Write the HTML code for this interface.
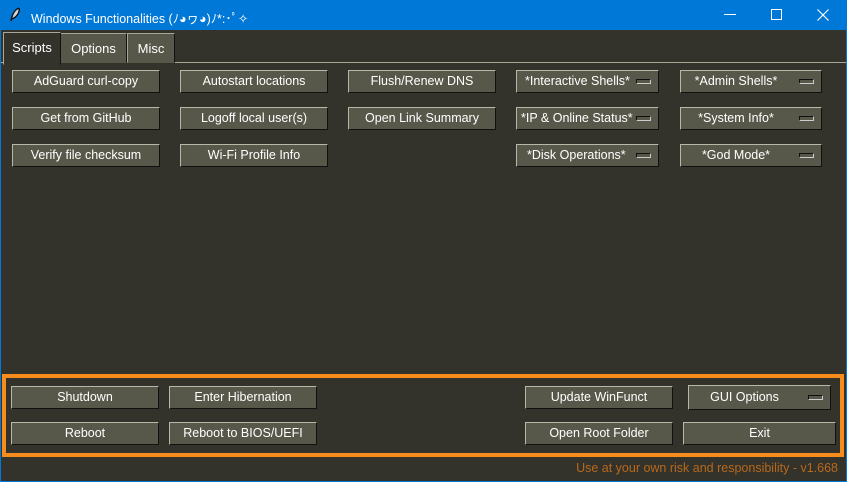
<!DOCTYPE html>
<html><head><meta charset="utf-8"><style>
*{margin:0;padding:0;box-sizing:border-box}
body{width:847px;height:482px;overflow:hidden;background:#0078d7;font-family:"Liberation Sans","DejaVu Sans",sans-serif;font-size:12.5px;position:relative}
#win{position:absolute;left:1px;top:30px;width:845px;height:451px;background:#33332b}
.t{position:absolute;color:#fff}
.b{position:absolute;height:23px;background:#58584a;border:1px solid;border-color:#b8b8a8 #111 #111 #b8b8a8;color:#fff;text-align:center;line-height:21px;white-space:nowrap}
.ind{position:absolute;right:7px;top:8px;width:15px;height:5px;background:#58584a;border:1px solid;border-color:#111 #ccc #ccc #111}
.tab{position:absolute;top:2px;height:32px;line-height:30px;text-align:center;color:#fff;font-size:13px;background:#58584a;border:1px solid;border-color:#a8a898 #111 transparent #a8a898}
</style></head><body>
<svg class="t" style="left:9px;top:7px" width="12" height="16" viewBox="0 0 12 16"><path d="M10 1 C5 3 3 8 2 14 M10 1 C11 5 8 10 3 12" stroke="#111" stroke-width="1.4" fill="#ddd"/></svg>
<div class="t" style="left:31px;top:8px;font-size:12.5px">Windows Functionalities (ﾉ◕ヮ◕)ﾉ*:･ﾟ✧</div>
<div class="t" style="left:724px;top:14px;width:12px;height:1px;background:#fff"></div>
<div class="t" style="left:771px;top:9px;width:11px;height:11px;border:1px solid #fff"></div>
<svg class="t" style="left:817px;top:9px" width="12" height="12" viewBox="0 0 12 12"><path d="M0.5 0.5L11.5 11.5M11.5 0.5L0.5 11.5" stroke="#fff" stroke-width="1.2"/></svg>
<div id="win">
<div style="position:absolute;left:0;top:32px;width:845px;height:1px;background:#a8a898"></div>
<div class="tab" style="left:59px;width:67px;top:3px;height:30px">Options</div>
<div class="tab" style="left:126px;width:48px;top:3px;height:30px">Misc</div>
<div class="tab" style="left:2px;width:58px;background:#33332b;border-bottom:1px solid #33332b;height:33px">Scripts</div>

<div class="b" style="left:11px;top:40px;width:148px">AdGuard curl-copy</div>
<div class="b" style="left:179px;top:40px;width:148px">Autostart locations</div>
<div class="b" style="left:347px;top:40px;width:148px">Flush/Renew DNS</div>
<div class="b" style="left:515px;top:40px;width:143px;text-align:left;padding-left:8px">*Interactive Shells*<span class="ind"></span></div>
<div class="b" style="left:679px;top:40px;width:142px;padding-right:30px">*Admin Shells*<span class="ind"></span></div>

<div class="b" style="left:11px;top:77px;width:148px">Get from GitHub</div>
<div class="b" style="left:179px;top:77px;width:148px">Logoff local user(s)</div>
<div class="b" style="left:347px;top:77px;width:148px">Open Link Summary</div>
<div class="b" style="left:515px;top:77px;width:143px;text-align:left;padding-left:4px">*IP &amp; Online Status*<span class="ind"></span></div>
<div class="b" style="left:679px;top:77px;width:142px;padding-right:30px">*System Info*<span class="ind"></span></div>

<div class="b" style="left:11px;top:114px;width:148px">Verify file checksum</div>
<div class="b" style="left:179px;top:114px;width:148px">Wi-Fi Profile Info</div>
<div class="b" style="left:515px;top:114px;width:143px;text-align:left;padding-left:10px">*Disk Operations*<span class="ind"></span></div>
<div class="b" style="left:679px;top:114px;width:142px;padding-right:30px">*God Mode*<span class="ind"></span></div>

<div style="position:absolute;left:1px;top:344px;width:842px;height:83px;border:4px solid #f78c1c"></div>
<div class="b" style="left:10px;top:356px;width:148px">Shutdown</div>
<div class="b" style="left:168px;top:356px;width:148px">Enter Hibernation</div>
<div class="b" style="left:524px;top:356px;width:148px">Update WinFunct</div>
<div class="b" style="left:687px;top:355px;width:143px;height:25px;line-height:23px;padding-right:30px">GUI Options<span class="ind" style="top:9px"></span></div>
<div class="b" style="left:10px;top:392px;width:148px">Reboot</div>
<div class="b" style="left:168px;top:392px;width:148px">Reboot to BIOS/UEFI</div>
<div class="b" style="left:524px;top:392px;width:148px">Open Root Folder</div>
<div class="b" style="left:682px;top:392px;width:153px">Exit</div>

<div class="t" style="right:8px;top:431px;color:#b8681c;font-size:12.5px">Use at your own risk and responsibility - v1.668</div>
</div>
</body></html>
